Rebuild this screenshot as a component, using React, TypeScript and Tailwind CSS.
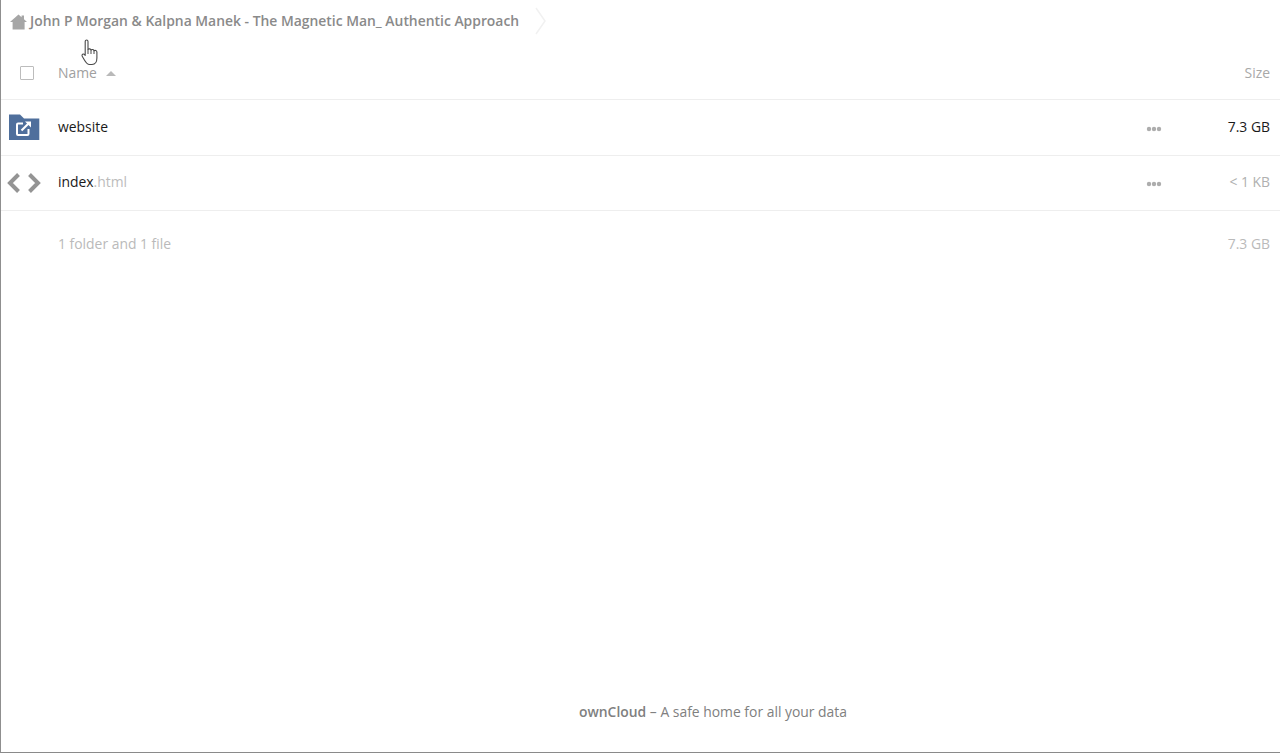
import React from "react";

function Dots() {
  return (
    <svg width="16" height="6" viewBox="0 0 16 6" className="block">
      <circle cx="3" cy="3" r="2.2" fill="#adadad" />
      <circle cx="8" cy="3" r="2.2" fill="#adadad" />
      <circle cx="13" cy="3" r="2.2" fill="#adadad" />
    </svg>
  );
}

function Row({ icon, name, size, sizeClass, rowClass }: { icon: React.ReactNode; name: React.ReactNode; size: string; sizeClass: string; rowClass: string }) {
  return (
    <div className={`flex items-center border-b border-[#eeeeee] ${rowClass}`}>
      <div className="flex w-[57px] shrink-0 justify-start pl-[6px]">{icon}</div>
      <div className="flex-1 text-[13.9px] text-[#1a1a1a]">{name}</div>
      <div className="mr-[68px] mt-[4px]"><Dots /></div>
      <div className={`w-[50px] pr-[10px] text-right text-[13.9px] whitespace-nowrap ${sizeClass}`}><span className="float-right">{size}</span></div>
    </div>
  );
}

export default function App() {
  return (
    <div className="relative flex h-[753px] w-[1280px] flex-col overflow-hidden border-b border-l border-b-[#8a8a8a] border-l-[#8f8f8f] bg-white font-['Open_Sans',sans-serif]">
      <div className="flex h-[42px] shrink-0 items-center pl-[9px]">
        <svg width="17" height="16" viewBox="0 0 17 16" className="mr-[3px] mt-[1px] shrink-0">
          <path d="M8.5 0.5 L11.6 3.2 V1.5 H14 V5.3 L17 8 H14.6 V15.5 H2.6 V8 H0 Z" fill="#a6a6a6" />
        </svg>
        <span className="text-[13.9px] font-semibold text-[#8a8a8a] whitespace-nowrap">John P Morgan &amp; Kalpna Manek - The Magnetic Man_ Authentic Approach</span>
        <svg width="12" height="30" viewBox="0 0 12 30" className="ml-[16px] shrink-0">
          <path d="M1 2 L10 15 L1 28" fill="none" stroke="#f1f1f1" strokeWidth="1.5" />
        </svg>
      </div>

      <div className="flex h-[58px] shrink-0 items-center border-b border-[#eeeeee] pt-[6px]">
        <div className="flex w-[57px] shrink-0 pl-[19px]">
          <div className="-mt-[2px] h-[14px] w-[14px] rounded-[1px] border border-[#bcbcbc] bg-white" />
        </div>
        <div className="flex flex-1 items-center gap-[9px] text-[13.9px] text-[#a0a0a0]">
          <span>Name</span>
          <svg width="10" height="5" viewBox="0 0 10 5" className="mt-[1px]"><path d="M5 0 L10 5 H0 Z" fill="#b9b9b9" /></svg>
        </div>
        <div className="pr-[10px] text-[13.9px] text-[#a8a8a8]">Size</div>
      </div>

      <Row
        rowClass="h-[56px] pb-[1px]"
        icon={
          <svg width="33" height="27" viewBox="0 0 33 27">
            <path d="M2 0.5 H13 L17 4.5 H32.3 V26 H2 Z" fill="#4f6f9c" />
            <rect x="10" y="9.5" width="11.5" height="11.5" rx="1" fill="none" stroke="#ffffff" strokeWidth="2" />
            <rect x="16" y="6" width="9" height="9" fill="#4f6f9c" />
            <path d="M14.5 16.5 L22 9" stroke="#ffffff" strokeWidth="2.2" fill="none" />
            <path d="M18 7.5 H24 V13.5 Z" fill="#ffffff" />
          </svg>
        }
        name="website"
        size="7.3 GB"
        sizeClass="text-[#1a1a1a]"
      />
      <Row
        rowClass="h-[55px] pb-[2px]"
        icon={
          <svg width="36" height="22" viewBox="0 0 36 22" className="ml-[-1px] mt-[1px]">
            <path d="M12.5 2.5 L4 11 L12.5 19.5" fill="none" stroke="#949494" strokeWidth="4" />
            <path d="M23.5 2.5 L32 11 L23.5 19.5" fill="none" stroke="#949494" strokeWidth="4" />
          </svg>
        }
        name={<>index<span className="text-[#bcbcbc]">.html</span></>}
        size="< 1 KB"
        sizeClass="text-[#b0b0b0]"
      />

      <div className="flex h-[66px] shrink-0 items-center pl-[57px] pr-[10px] text-[13.9px] text-[#bababa]">
        <span className="flex-1">1 folder and 1 file</span>
        <span>7.3 GB</span>
      </div>

      <div className="flex flex-1 items-end justify-center pb-[29px] pl-[145px] text-[13.9px] text-[#808080]">
        <p><span className="font-semibold">ownCloud</span> – A safe home for all your data</p>
      </div>

      <svg width="22" height="28" viewBox="0 0 20 28" className="absolute left-[79px] top-[39px]">
        <path
          d="M4.2 2.4 C4.2 0.6 7 0.6 7 2.4 V10.5 C7.6 9.6 9.8 9.6 10 11 C10.8 10.2 12.8 10.4 13 11.8 C13.9 11.1 15.8 11.4 15.9 13 V19 C15.9 22 14.5 25.5 11 25.5 H8.5 C6 25.5 4.8 23.5 3.4 21 L1.2 17.2 C0.3 15.6 2.4 14.2 3.6 15.6 L4.2 16.4 Z"
          fill="#ffffff"
          stroke="#4a4a4a"
          strokeWidth="1.1"
          strokeLinejoin="round"
        />
        <path d="M7 10.5 V15 M10 11 V15 M13 11.8 V15" stroke="#4a4a4a" strokeWidth="1" />
      </svg>
    </div>
  );
}
